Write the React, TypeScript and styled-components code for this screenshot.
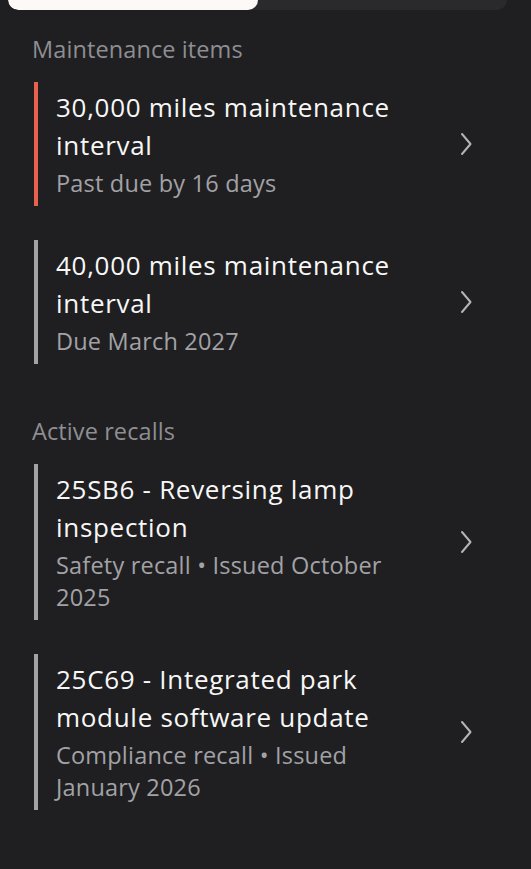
import React from 'react';
import styled, { createGlobalStyle } from 'styled-components';

type Item = {
	title: string;
	subtitle: string;
	overdue?: boolean;
};

const maintenanceItems: Item[] = [
	{
		title: '30,000 miles maintenance interval',
		subtitle: 'Past due by 16 days',
		overdue: true,
	},
	{ title: '40,000 miles maintenance interval', subtitle: 'Due March 2027' },
];

const recallItems: Item[] = [
	{
		title: '25SB6 - Reversing lamp inspection',
		subtitle: 'Safety recall • Issued October 2025',
	},
	{
		title: '25C69 - Integrated park module software update',
		subtitle: 'Compliance recall • Issued January 2026',
	},
];

const Chevron = () => (
	<svg width="24" height="24" viewBox="0 0 24 24" fill="none">
		<path
			d="M8 2 L16.5 12 L8 22"
			stroke="#b4b4b8"
			strokeWidth="2"
			strokeLinecap="round"
			strokeLinejoin="round"
		/>
	</svg>
);

const ListItem = ({ item }: { item: Item }) => (
	<Row $overdue={item.overdue}>
		<TextBlock>
			<Title>{item.title}</Title>
			<Subtitle>{item.subtitle}</Subtitle>
		</TextBlock>
		<ChevronBox>
			<Chevron />
		</ChevronBox>
	</Row>
);

export default function App() {
	return (
		<>
			<GlobalStyle />
			<Page>
				<SegmentedControl>
					<Segment $active />
					<Segment />
				</SegmentedControl>

				<Section>
					<SectionHeading>Maintenance items</SectionHeading>
					<List>
						{maintenanceItems.map((item) => (
							<ListItem key={item.title} item={item} />
						))}
					</List>
				</Section>

				<Section>
					<SectionHeading>Active recalls</SectionHeading>
					<List>
						{recallItems.map((item) => (
							<ListItem key={item.title} item={item} />
						))}
					</List>
				</Section>
			</Page>
		</>
	);
}

const GlobalStyle = createGlobalStyle`
	html, body {
		margin: 0;
		background-color: #1f1f21;
	}
	body {
		font-family: 'Open Sans', 'Noto Sans', sans-serif;
		-webkit-font-smoothing: antialiased;
	}
`;

const Page = styled.main`
	display: flex;
	flex-direction: column;
	gap: 51px;
	min-height: 869px;
	box-sizing: border-box;
	padding-bottom: 40px;
`;

const SegmentedControl = styled.div`
	display: flex;
	height: 44px;
	margin: -34px 24px -28px 8px;
	background-color: #2a2a2d;
	border-radius: 0 0 10px 10px;
	overflow: hidden;
`;

const Segment = styled.div<{ $active?: boolean }>`
	flex: 1;
	background-color: ${(p) => (p.$active ? '#fdf9f7' : 'transparent')};
	border-radius: 0 0 10px 10px;
`;

const Section = styled.section`
	display: flex;
	flex-direction: column;
	gap: 17px;
	padding: 0 32px;
`;

const SectionHeading = styled.h2`
	margin: 0;
	font-size: 23.5px;
	line-height: 32px;
	font-weight: 400;
	letter-spacing: 0.1px;
	color: #8e8e93;
`;

const List = styled.div`
	display: flex;
	flex-direction: column;
	gap: 34px;
`;

const Row = styled.div<{ $overdue?: boolean }>`
	display: flex;
	align-items: center;
	gap: 24px;
	margin-left: 2px;
	padding: 6px 21px 7px 18px;
	border-left: 4px solid ${(p) => (p.$overdue ? '#e8614d' : '#a3a3a6')};
`;

const TextBlock = styled.div`
	flex: 1;
	display: flex;
	flex-direction: column;
	gap: 3px;
`;

const Title = styled.div`
	font-size: 26px;
	line-height: 38px;
	letter-spacing: 0.7px;
	color: #f7f7f7;
`;

const Subtitle = styled.div`
	font-size: 23.5px;
	line-height: 32px;
	letter-spacing: 0.2px;
	color: #a2a2a6;
`;

const ChevronBox = styled.div`
	display: flex;
	width: 24px;
	height: 24px;
`;
